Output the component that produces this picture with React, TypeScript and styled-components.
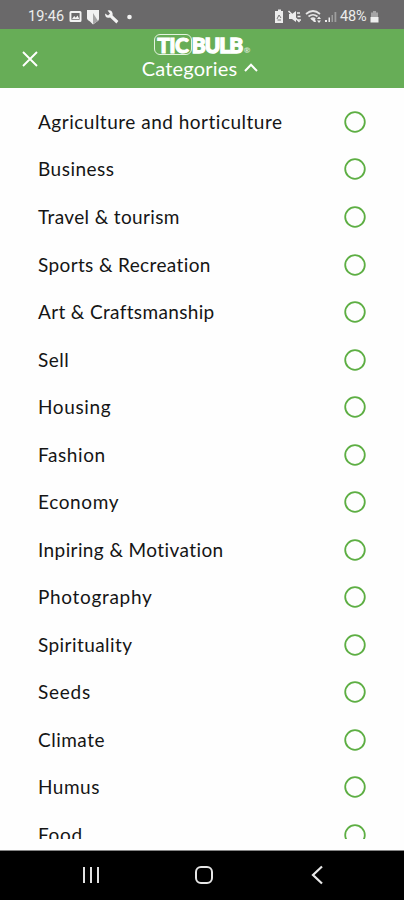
import React from "react";
import styled, { createGlobalStyle } from "styled-components";

const GlobalStyle = createGlobalStyle`
  * { box-sizing: border-box; }
  body { margin: 0; background: #fff; }
`;

const Screen = styled.main`
  width: 404px;
  height: 900px;
  display: flex;
  flex-direction: column;
  overflow: hidden;
  background: #fefefe;
  font-family: Lato, "Liberation Sans", sans-serif;
`;

const StatusBar = styled.div`
  height: 28.5px;
  flex: none;
  display: flex;
  justify-content: space-between;
  padding: 3px 25px 0 28px;
  background: #6a696a;
  color: #ededed;
  font: 400 14.5px/28px Roboto, sans-serif;
`;

const StatusGroup = styled.div`
  display: flex;
  align-items: center;
  height: 28px;
  svg { display: block; flex: none; }
`;

const Clock = styled.span`
  width: 36px;
  margin-right: 5px;
`;

const Percent = styled.span`
  width: 30px;
  font-size: 14.5px;
  letter-spacing: -0.1px;
`;

const Header = styled.header`
  height: 59px;
  flex: none;
  display: grid;
  grid-template-columns: 60px 1fr 60px;
  align-items: center;
  background: #67ad57;
  color: #fff;
`;

const IconButton = styled.button`
  width: 60px;
  height: 59px;
  padding: 0;
  border: 0;
  background: none;
  color: inherit;
  svg { display: block; }
`;

const Brand = styled.div`
  align-self: start;
  display: flex;
  flex-direction: column;
  align-items: center;
  padding-top: 5px;
`;

const Logo = styled.div`
  height: 22px;
  display: flex;
  align-items: center;
  font: 900 21px/22px Lato, sans-serif;
`;

const LogoBadge = styled.span`
  width: 38px;
  height: 21px;
  display: flex;
  justify-content: center;
  border: 1.2px solid #e4f3df;
  border-radius: 6px;
  line-height: 20px;
  letter-spacing: -0.6px;
  -webkit-text-stroke: 1px #fff;
`;

const LogoText = styled.span`
  width: 52px;
  letter-spacing: -1px;
  -webkit-text-stroke: 1.3px #fff;
`;

const Registered = styled.span`
  align-self: flex-end;
  font: 700 8px/12px Lato, sans-serif;
  opacity: 0.75;
`;

const Title = styled.div`
  display: flex;
  align-items: center;
  gap: 7px;
  height: 24px;
  margin-left: -4px;
  font-size: 20px;
  line-height: 24px;
  letter-spacing: 0.2px;
`;

const List = styled.ul`
  height: 751.5px;
  flex: none;
  margin: 0;
  padding: 10.7px 38px 0;
  list-style: none;
  overflow: hidden;
`;

const Row = styled.li`
  height: 47.54px;
  display: flex;
  align-items: center;
  justify-content: space-between;
`;

const Label = styled.span<{ $spacing: number }>`
  font-size: 19px;
  line-height: 26px;
  letter-spacing: ${({ $spacing }) => $spacing}px;
  color: #151515;
  white-space: nowrap;
`;

const Radio = styled.svg`
  display: block;
  width: 22px;
  height: 22px;
  fill: none;
  stroke: #5dae43;
  stroke-width: 1.8px;
`;

const Spacer = styled.div`
  flex: 1;
`;

const NavBar = styled.nav`
  height: 50px;
  flex: none;
  display: grid;
  grid-template-columns: 182px 44px 1fr;
  align-items: center;
  justify-items: center;
  padding-bottom: 1px;
  border-top: 1px solid #858585;
  background: #000;
  svg { display: block; }
`;

const Back = styled.div`
  padding-left: 4px;
`;

const categories: { name: string; spacing: number }[] = [
  { name: "Agriculture and horticulture", spacing: 0.5 },
  { name: "Business", spacing: 0.5 },
  { name: "Travel & tourism", spacing: 0.37 },
  { name: "Sports & Recreation", spacing: 0.37 },
  { name: "Art & Craftsmanship", spacing: 0.35 },
  { name: "Sell", spacing: 0.5 },
  { name: "Housing", spacing: 0.64 },
  { name: "Fashion", spacing: 0.6 },
  { name: "Economy", spacing: 0.64 },
  { name: "Inpiring & Motivation", spacing: 0.4 },
  { name: "Photography", spacing: 0.68 },
  { name: "Spirituality", spacing: 0.43 },
  { name: "Seeds", spacing: 0.75 },
  { name: "Climate", spacing: 0.5 },
  { name: "Humus", spacing: 0.5 },
  { name: "Food", spacing: 0.7 },
];

const NotificationIcons = () => (
  <svg width="64" height="18" viewBox="0 0 64 18" fill="#f2f2f2">
    <path fillRule="evenodd" d="M2 3h9q1.500 0 1.500 1.500v8q0 1.500-1.500 1.500h-9q-1.500 0-1.500-1.500v-8q0-1.500 1.500-1.500zM2.400 5v6.800h8.200v-6.800z" />
    <path d="M3 11l2.200-3 1.600 1.700 1.700-2.300 1.800 3.600z" />
    <path d="M18 2h12v9q0 1.500-2 2.500l-4 3-3-3q-3-1.500-3-3z" />
    <path d="M24 5l5 8-5 3z" fill="#a5a5a5" />
    <path d="M36 5.500l3 2 2-2-2.400-3q4-1 5 3v2l5.800 5.500-2 2.400-6.300-6q-5 1.500-5.100-3.900z" />
    <circle cx="60.500" cy="9" r="2.300" />
  </svg>
);

const SystemIcons = () => (
  <svg width="67" height="18" viewBox="0 0 67 18" fill="#ededed">
    <path d="M3 3h2v-1.500h3v1.500h2v12h-8v-12z" />
    <path d="M4 11l2-4 2 3M4.500 12h3.500" fill="none" stroke="#777" />
    <path d="M16 6h3l4-3v11l-4-3h-3z" />
    <path d="M15.500 3l11 11M24 5h3M24.500 8.500h3M25 12h3" fill="none" stroke="#ededed" strokeWidth="1.500" />
    <path d="M33 6q7-6 14 0M35.500 8.500q4.500-3.500 9 0M37.800 11q2.200-1.700 4.400 0" fill="none" stroke="#e5e5e5" strokeWidth="1.700" />
    <path d="M38 11h4l1 3h-2z" />
    <path d="M44 11l2-2.500 2 2.500zM44 12.500h4l-2 2.500z" />
    <path d="M52 14v-2h2v2zM55.500 14v-4.500h1.500v4.500z" />
    <path d="M58.500 14v-7h1.500v7zM61.500 14v-10h1.800v10z" opacity=".4" />
  </svg>
);

const BatteryIcon = () => (
  <svg width="9" height="16" viewBox="0 0 9 16" fill="#eee">
    <path d="M3 2h3v1.500h2v4.500h-7v-4.500h2z" opacity=".45" />
    <path d="M.5 8h8v5.500h-8z" />
  </svg>
);

export default function App() {
  return (
    <Screen>
      <GlobalStyle />
      <StatusBar>
        <StatusGroup>
          <Clock>19:46</Clock>
          <NotificationIcons />
        </StatusGroup>
        <StatusGroup>
          <SystemIcons />
          <Percent>48%</Percent>
          <BatteryIcon />
        </StatusGroup>
      </StatusBar>
      <Header>
        <IconButton aria-label="Close">
          <svg width="60" height="59" viewBox="0 0 60 59" fill="none" stroke="currentColor" strokeWidth="1.900">
            <path d="M23 23l14 14M37 23l-14 14" />
          </svg>
        </IconButton>
        <Brand>
          <Logo>
            <LogoBadge>TIC</LogoBadge>
            <LogoText>BULB</LogoText>
            <Registered>®</Registered>
          </Logo>
          <Title>
            Categories
            <svg width="14" height="9" viewBox="0 0 14 9" fill="none" stroke="currentColor" strokeWidth="2">
              <path d="M1 8l6-6.200 6 6.200" />
            </svg>
          </Title>
        </Brand>
      </Header>
      <List>
        {categories.map(({ name, spacing }) => (
          <Row key={name}>
            <Label $spacing={spacing}>{name}</Label>
            <Radio viewBox="0 0 22 22">
              <circle cx="11" cy="11" r="9.800" />
            </Radio>
          </Row>
        ))}
      </List>
      <Spacer />
      <NavBar>
        <svg width="18" height="18" viewBox="0 0 18 18" stroke="#e2e2e2" strokeWidth="2">
          <path d="M2 1v16M9 1v16M16 1v16" />
        </svg>
        <svg width="20" height="20" viewBox="0 0 20 20" fill="none" stroke="#e6e6e6" strokeWidth="2">
          <rect x="2" y="2" width="16" height="16" rx="5" />
        </svg>
        <Back>
          <svg width="12" height="20" viewBox="0 0 12 20" fill="none" stroke="#e8e8e8" strokeWidth="2.200">
            <path d="M11 1.500l-9 8.500 9 8.500" />
          </svg>
        </Back>
      </NavBar>
    </Screen>
  );
}
